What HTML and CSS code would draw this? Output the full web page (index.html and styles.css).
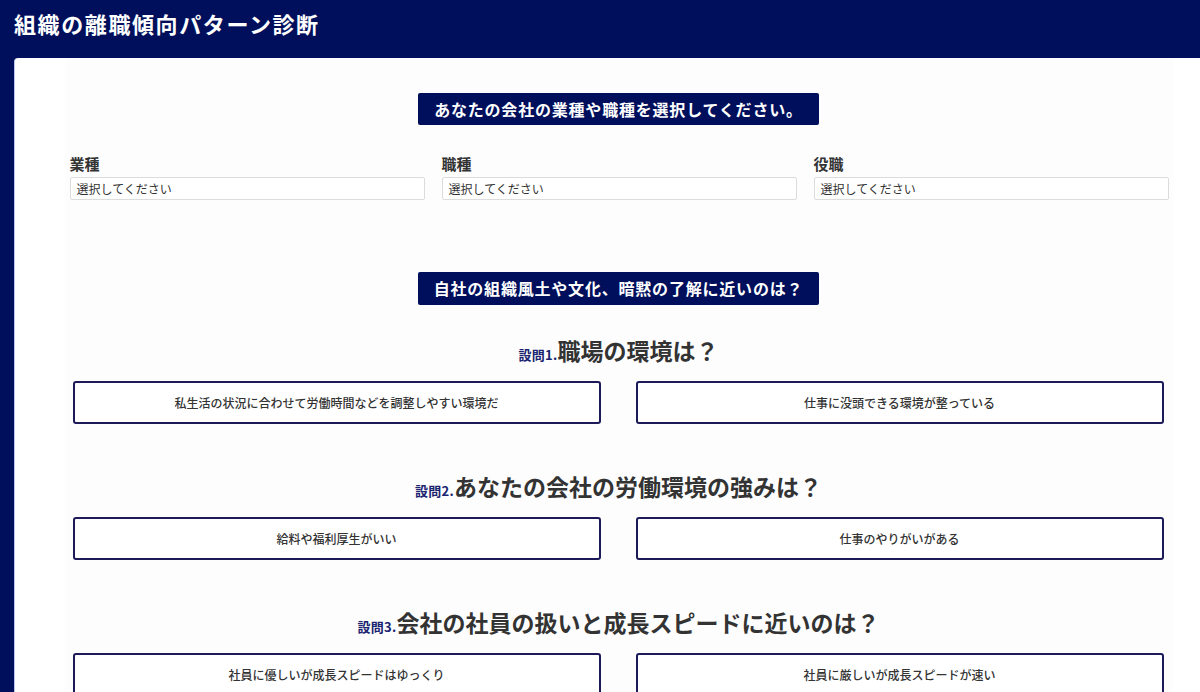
FILE: index.html
```html
<!DOCTYPE html>
<html lang="ja">
<head>
<meta charset="utf-8">
<title>組織の離職傾向パターン診断</title>
<link rel="stylesheet" href="styles.css">
</head>
<body>
<header class="header">
  <h1 class="title">組織の離職傾向パターン診断</h1>
</header>
<main class="card">
  <div class="inner">
    <div class="banner-row"><h2 class="banner">あなたの会社の業種や職種を選択してください。</h2></div>
    <div class="fields">
      <div class="field">
        <label class="label">業種</label>
        <div class="select">選択してください</div>
      </div>
      <div class="field">
        <label class="label">職種</label>
        <div class="select">選択してください</div>
      </div>
      <div class="field">
        <label class="label">役職</label>
        <div class="select">選択してください</div>
      </div>
    </div>

    <div class="banner-row banner-row-2"><h2 class="banner">自社の組織風土や文化、暗黙の了解に近いのは？</h2></div>

    <section class="question">
      <h3 class="q-title"><span class="q-num">設問1.</span>職場の環境は？</h3>
      <div class="options">
        <button class="option">私生活の状況に合わせて労働時間などを調整しやすい環境だ</button>
        <button class="option">仕事に没頭できる環境が整っている</button>
      </div>
    </section>

    <section class="question">
      <h3 class="q-title"><span class="q-num">設問2.</span>あなたの会社の労働環境の強みは？</h3>
      <div class="options">
        <button class="option">給料や福利厚生がいい</button>
        <button class="option">仕事のやりがいがある</button>
      </div>
    </section>

    <section class="question">
      <h3 class="q-title"><span class="q-num">設問3.</span>会社の社員の扱いと成長スピードに近いのは？</h3>
      <div class="options">
        <button class="option">社員に優しいが成長スピードはゆっくり</button>
        <button class="option">社員に厳しいが成長スピードが速い</button>
      </div>
    </section>
  </div>
</main>
</body>
</html>
```

FILE: styles.css
```css
html, body {
  margin: 0;
  padding: 0;
}
body {
  background: #000f5c;
  font-family: "Noto Sans CJK JP", "Noto Sans", sans-serif;
  color: #333;
  overflow: hidden;
  width: 1200px;
  height: 692px;
}
.header {
  height: 58px;
  box-sizing: border-box;
  padding: 7px 14px 0;
}
.title {
  margin: 0;
  color: #fff;
  font-size: 22px;
  font-weight: 700;
  line-height: 32px;
  letter-spacing: 1.6px;
}
.card {
  display: block;
  margin-left: 14px;
  width: 1208px;
  height: 634px;
  overflow: hidden;
  background: #fff;
  border-top-left-radius: 4px;
  border-left: 1px solid #b8c8ee;
  box-sizing: border-box;
}
.inner {
  width: 1108px;
  margin: 0 auto;
  background: #fdfdfd;
  padding-top: 35px;
  height: 100%;
  box-sizing: border-box;
}
.banner-row {
  display: flex;
  justify-content: center;
}
.banner {
  margin: 0;
  background: #000f5c;
  color: #fff;
  font-size: 16px;
  font-weight: 700;
  line-height: 32px;
  height: 32px;
  width: 401px;
  text-align: center;
  letter-spacing: 0.8px;
  border-radius: 2px;
}
.banner-row-2 {
  margin-top: 72px;
}
.banner-row-2 .banner {
  height: 33px;
  line-height: 33px;
}
.fields {
  display: grid;
  grid-template-columns: repeat(3, 355px);
  column-gap: 17px;
  padding: 0 5px;
  margin-top: 28px;
}
.field {
  display: flex;
  flex-direction: column;
}
.label {
  font-size: 15px;
  font-weight: 700;
  line-height: 22px;
  height: 22px;
  margin-bottom: 2px;
  color: #333;
}
.select {
  height: 23px;
  box-sizing: border-box;
  border: 1px solid #dcdcdc;
  border-radius: 2px;
  background: #fff;
  font-size: 12px;
  line-height: 21px;
  padding-left: 6px;
  color: #333;
}
.question {
  margin-top: 30px;
}
.question + .question {
  margin-top: 47px;
}
.q-title {
  margin: 0;
  text-align: center;
  font-size: 23px;
  font-weight: 700;
  line-height: 30px;
  height: 30px;
  color: #333;
}
.q-num {
  font-size: 13px;
  color: #1a2470;
  letter-spacing: 0.3px;
}
.options {
  display: grid;
  grid-template-columns: 528px 528px;
  column-gap: 35px;
  padding: 0 9px 0 8px;
  margin-top: 16px;
}
.option {
  height: 43px;
  box-sizing: border-box;
  border: 2px solid #1c1a58;
  border-radius: 3px;
  background: #fff;
  font-family: "Noto Sans CJK JP", "Noto Sans", sans-serif;
  font-size: 12px;
  font-weight: 500;
  color: #333;
  text-align: center;
  padding: 0;
}
```
